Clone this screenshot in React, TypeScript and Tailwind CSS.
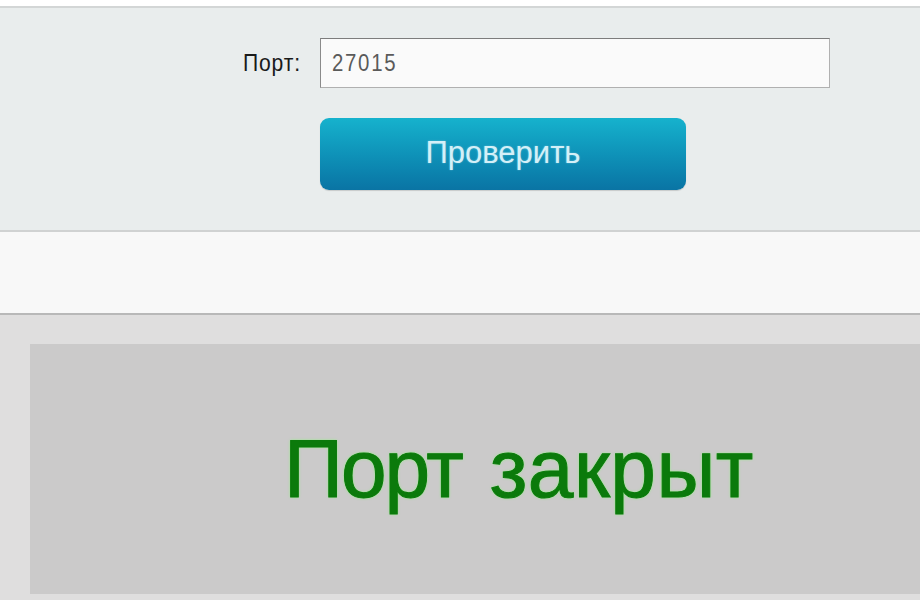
export default function App() {
  return (
    <div className="w-[920px] h-[602px] overflow-hidden bg-white font-['Liberation_Sans',Arial,sans-serif]">
      {/* top strip */}
      <div className="h-[6px] bg-white" />

      {/* form panel */}
      <div className="h-[224px] border-t-2 border-[#d3d6d6] bg-[#e9eded] pt-[30px]">
        <div className="flex items-center">
          <div className="w-[301px] text-right">
            <label className="inline-block origin-right scale-x-[0.88] text-[24px] tracking-[1px] text-[#1a1a1a]">
              Порт:
            </label>
          </div>
          <div className="ml-[19px] flex h-[50px] w-[510px] items-center border border-[#b0b0b0] border-t-[#7d7d7d] border-l-[#8a8a8a] bg-[#fafafa] pl-[11px] text-[#5a5a5a]">
            <span className="inline-block origin-left scale-x-[0.85] text-[24px] tracking-[2px]">27015</span>
          </div>
        </div>
        <div className="mt-[30px] pl-[320px]">
          <button className="flex h-[72px] w-[366px] items-center justify-center rounded-[9px] bg-gradient-to-b from-[#16b2cd] to-[#0a74a4] pb-[2px] text-[31px] text-[#d4f0f8] shadow-[0_1px_1px_rgba(0,0,0,0.15)] [text-shadow:0_0_2px_rgba(255,255,255,0.35)]">
            Проверить
          </button>
        </div>
      </div>

      {/* light band */}
      <div className="h-[83px] border-t-2 border-[#d0d2d2] bg-[#f8f8f8]" />

      {/* result area */}
      <div className="h-[287px] border-t-2 border-[#b8b8b8] bg-[#dfdede] pl-[30px] pt-[29px]">
        <div className="flex h-[250px] items-start bg-[#cbcaca] pl-[254px] pt-[84px]">
          <span className="text-[82px] leading-none text-[#0b7a0b] [-webkit-text-stroke:1px_#0b7a0b] [text-shadow:0_0_3px_#7cff6a]">
            <span className="tracking-[-2px]">Порт</span>{" "}
            <span className="ml-[5px] tracking-[0.5px]">закрыт</span>
          </span>
        </div>
      </div>
    </div>
  );
}
